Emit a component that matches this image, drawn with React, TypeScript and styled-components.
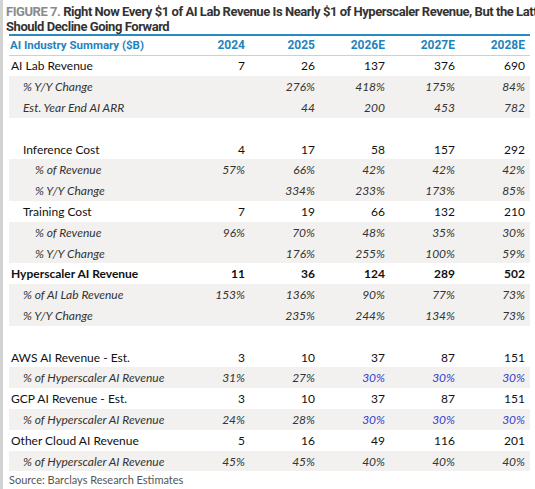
import React from 'react';
import styled, { createGlobalStyle } from 'styled-components';

const GlobalStyle = createGlobalStyle`
  html, body {
    margin: 0;
    padding: 0;
    background: #ffffff;
    width: 535px;
    height: 489px;
    overflow: hidden;
  }
`;

type Kind = 'top' | 'sub' | 'bold' | 'blank';

type Row = {
  label: string;
  indent: number;
  kind: Kind;
  italic?: boolean;
  shaded?: boolean;
  values: string[];
  blue?: boolean[];
};

const years = ['2024', '2025', '2026E', '2027E', '2028E'];

const rows: Row[] = [
  { label: 'AI Lab Revenue', indent: 0, kind: 'top', values: ['7', '26', '137', '376', '690'] },
  { label: '% Y/Y Change', indent: 1, kind: 'sub', italic: true, shaded: true, values: ['', '276%', '418%', '175%', '84%'] },
  { label: 'Est. Year End AI ARR', indent: 1, kind: 'sub', italic: true, shaded: true, values: ['', '44', '200', '453', '782'] },
  { label: '', indent: 0, kind: 'blank', values: [] },
  { label: 'Inference Cost', indent: 1, kind: 'top', values: ['4', '17', '58', '157', '292'] },
  { label: '% of Revenue', indent: 2, kind: 'sub', italic: true, shaded: true, values: ['57%', '66%', '42%', '42%', '42%'] },
  { label: '% Y/Y Change', indent: 2, kind: 'sub', italic: true, shaded: true, values: ['', '334%', '233%', '173%', '85%'] },
  { label: 'Training Cost', indent: 1, kind: 'top', values: ['7', '19', '66', '132', '210'] },
  { label: '% of Revenue', indent: 2, kind: 'sub', italic: true, shaded: true, values: ['96%', '70%', '48%', '35%', '30%'] },
  { label: '% Y/Y Change', indent: 2, kind: 'sub', italic: true, shaded: true, values: ['', '176%', '255%', '100%', '59%'] },
  { label: 'Hyperscaler AI Revenue', indent: 0, kind: 'bold', values: ['11', '36', '124', '289', '502'] },
  { label: '% of AI Lab Revenue', indent: 1, kind: 'sub', italic: true, shaded: true, values: ['153%', '136%', '90%', '77%', '73%'] },
  { label: '% Y/Y Change', indent: 1, kind: 'sub', italic: true, shaded: true, values: ['', '235%', '244%', '134%', '73%'] },
  { label: '', indent: 0, kind: 'blank', values: [] },
  { label: 'AWS AI Revenue - Est.', indent: 0, kind: 'top', values: ['3', '10', '37', '87', '151'] },
  {
    label: '% of Hyperscaler AI Revenue', indent: 1, kind: 'sub', italic: true, shaded: true,
    values: ['31%', '27%', '30%', '30%', '30%'], blue: [false, false, true, true, true],
  },
  { label: 'GCP AI Revenue - Est.', indent: 0, kind: 'top', values: ['3', '10', '37', '87', '151'] },
  {
    label: '% of Hyperscaler AI Revenue', indent: 1, kind: 'sub', italic: true, shaded: true,
    values: ['24%', '28%', '30%', '30%', '30%'], blue: [false, false, true, true, true],
  },
  { label: 'Other Cloud AI Revenue', indent: 0, kind: 'top', values: ['5', '16', '49', '116', '201'] },
  { label: '% of Hyperscaler AI Revenue', indent: 1, kind: 'sub', italic: true, shaded: true, values: ['45%', '45%', '40%', '40%', '40%'] },
];

export default function App() {
  return (
    <>
      <GlobalStyle />
      <Page>
        <Title>
          <TitleLine>
            <FigureTag>FIGURE 7. </FigureTag>
            Right Now Every $1 of AI Lab Revenue Is Nearly $1 of Hyperscaler Revenue, But the Latter
          </TitleLine>
          <TitleLine>Should Decline Going Forward</TitleLine>
        </Title>
        <Table>
          <HeaderRow>
            <HeaderLabel>AI Industry Summary ($B)</HeaderLabel>
            {years.map((y) => (
              <HeaderCell key={y}>{y}</HeaderCell>
            ))}
          </HeaderRow>
          {rows.map((r, i) => (
            <DataRow key={i} $shaded={!!r.shaded}>
              <Label $indent={r.indent} $italic={!!r.italic} $bold={r.kind === 'bold'}>
                {r.label}
              </Label>
              {r.kind !== 'blank' &&
                r.values.map((v, j) => (
                  <Value
                    key={j}
                    $italic={!!r.italic}
                    $bold={r.kind === 'bold'}
                    $blue={!!r.blue?.[j]}
                  >
                    {v}
                  </Value>
                ))}
            </DataRow>
          ))}
        </Table>
        <Source>Source: Barclays Research Estimates</Source>
      </Page>
    </>
  );
}

const Page = styled.div`
  box-sizing: border-box;
  width: 535px;
  height: 489px;
  padding: 4px 8px 0 6px;
  border-left: 3px solid #d2d2d2;
  font-family: Lato, 'Liberation Sans', sans-serif;
  color: #222;
  overflow: hidden;
`;

const Title = styled.div`
  font-family: Roboto, 'Liberation Sans', sans-serif;
  font-weight: 700;
  font-size: 13px;
  line-height: 15px;
  color: #333;
  letter-spacing: -0.45px;
  margin-left: -3px;
  width: 532px;
  overflow: hidden;
`;

const TitleLine = styled.div`
  white-space: nowrap;
`;

const FigureTag = styled.span`
  color: #8a8a8a;
`;

const Table = styled.div`
  width: 521px;
  border-top: 2.5px solid #2a8ac2;
`;

const columns = `171px repeat(5, 70px)`;

const HeaderRow = styled.div`
  display: grid;
  grid-template-columns: ${columns};
  height: 18.5px;
  align-items: center;
  border-bottom: 1.5px solid #cfcfcf;
  font-family: Roboto, 'Liberation Sans', sans-serif;
  font-weight: 700;
  font-size: 12px;
  color: #1f84bd;
`;

const HeaderLabel = styled.div`
  padding-left: 1px;
  font-size: 11.5px;
`;

const HeaderCell = styled.div`
  text-align: right;
  padding-right: 5px;
`;

const DataRow = styled.div<{ $shaded: boolean }>`
  display: grid;
  grid-template-columns: ${columns};
  height: 20.8px;
  align-items: center;
  font-size: 12px;
  background: ${(p) => (p.$shaded ? '#f2f1ef' : '#ffffff')};
`;

const Label = styled.div<{ $indent: number; $italic: boolean; $bold: boolean }>`
  padding-left: ${(p) => 2 + p.$indent * 12}px;
  font-style: ${(p) => (p.$italic ? 'italic' : 'normal')};
  font-weight: ${(p) => (p.$bold ? 700 : 400)};
  color: ${(p) => (p.$italic ? '#333' : '#111')};
  white-space: nowrap;
`;

const Value = styled.div<{ $italic: boolean; $bold: boolean; $blue: boolean }>`
  text-align: right;
  padding-right: 5px;
  font-style: ${(p) => (p.$italic ? 'italic' : 'normal')};
  font-weight: ${(p) => (p.$bold ? 700 : 400)};
  color: ${(p) => (p.$blue ? '#3a3ad0' : p.$italic ? '#333' : '#111')};
`;

const Source = styled.div`
  font-size: 11px;
  line-height: 15px;
  color: #555;
  padding-top: 1px;
`;
